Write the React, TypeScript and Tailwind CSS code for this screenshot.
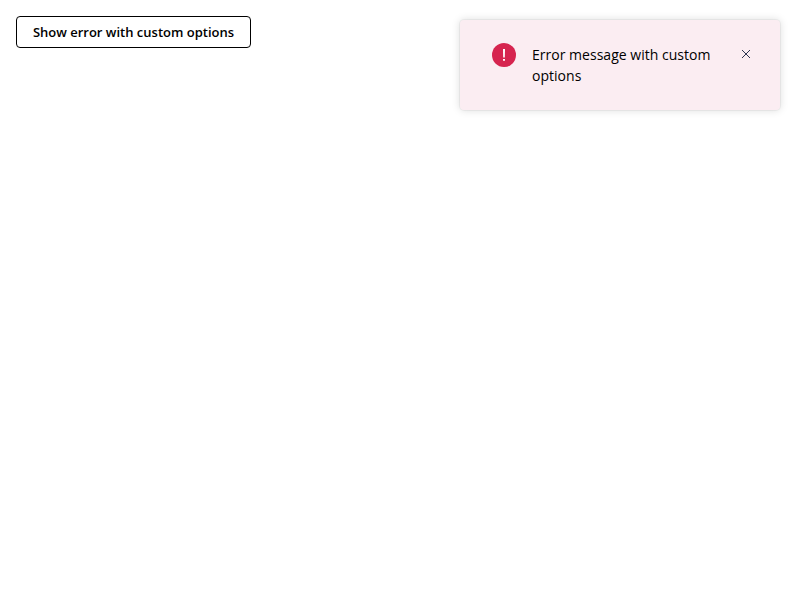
export default function App() {
  return (
    <div className="flex min-h-screen items-start justify-between bg-white font-['Open_Sans',sans-serif] text-black antialiased">
      <button className="mt-4 ml-4 h-8 w-[235px] rounded border border-black bg-white text-[13px] leading-5 font-semibold whitespace-nowrap">
        Show error with custom options
      </button>
      <div
        role="alert"
        className="mt-5 mr-5 flex h-[90px] w-80 items-start rounded bg-[#fbedf2] pt-[22px] pr-[26px] pl-8 shadow-[0_0_0_1px_rgba(0,0,0,0.04),0_0_8px_rgba(0,0,0,0.15)]"
      >
        <svg className="mt-px size-6 shrink-0" viewBox="0 0 24 24">
          <circle cx="12" cy="12" r="12" fill="#d6244f" />
          <path d="M11 6h2l-.2 8.4h-1.6z" fill="#fff" />
          <path d="M11 16h2v1.8h-2z" fill="#fff" />
        </svg>
        <p className="ml-4 w-[184px] pt-0.5 text-sm leading-[21px] tracking-[0.02px]">
          Error message with custom options
        </p>
        <button aria-label="Close" className="mt-1 ml-auto size-4">
          <svg className="size-4" viewBox="0 0 16 16" fill="none" stroke="#2f3650" strokeWidth="1">
            <path d="M4 4l8 8M12 4l-8 8" />
          </svg>
        </button>
      </div>
    </div>
  );
}
